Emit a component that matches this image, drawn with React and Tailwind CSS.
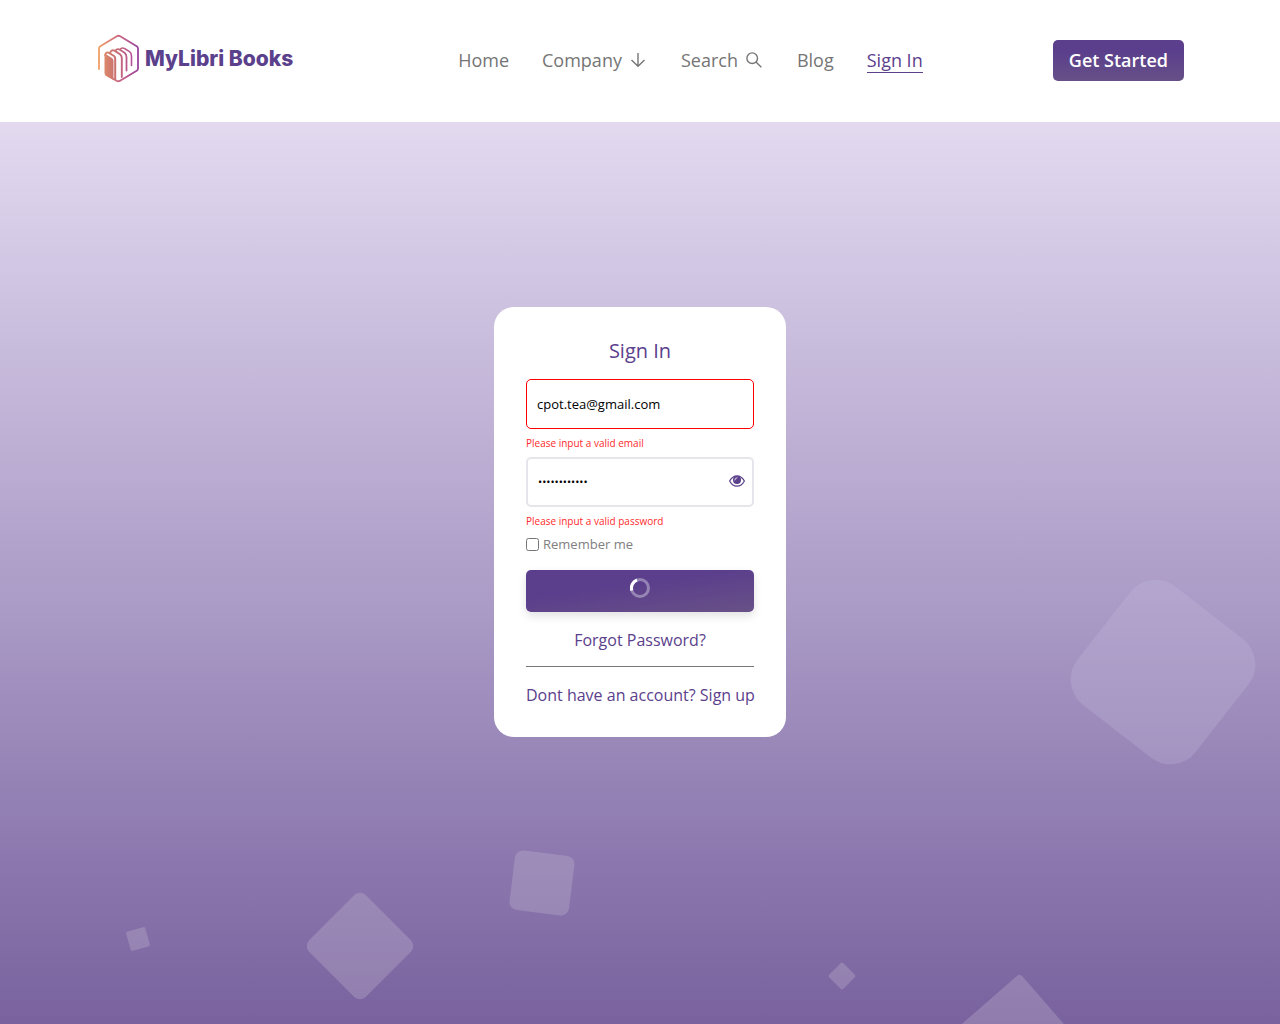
import React, { useState } from "react";

const navLink = "flex items-center text-lg leading-6 text-[#757575]";

function Logo() {
  return (
    <a href="#home" className="flex h-[50px] w-[200px] items-center text-[#5b408c]">
      <svg width="45" height="50" viewBox="0 0 45 50" fill="none" aria-hidden="true" className="shrink-0">
        <defs>
          <linearGradient id="hex" x1="2" y1="0" x2="43" y2="0" gradientUnits="userSpaceOnUse">
            <stop offset="0" stopColor="#f2a265" />
            <stop offset="0.5" stopColor="#cc6680" />
            <stop offset="1" stopColor="#98439f" />
          </linearGradient>
          <linearGradient id="book" x1="8" y1="0" x2="36" y2="0" gradientUnits="userSpaceOnUse">
            <stop offset="0" stopColor="#dd8a6b" />
            <stop offset="0.4" stopColor="#c9706f" />
            <stop offset="1" stopColor="#b5509a" />
          </linearGradient>
        </defs>
        <path d="M3 35V14.5Q3 13 4.3 12.2L20.8 2.2Q22.5 1.3 24.2 2.2L40.7 12.2Q42 13 42 14.5V34.5Q42 36 40.7 36.8L24.5 46.4Q22.5 47.8 20.5 46.8L10 41" stroke="url(#hex)" strokeWidth="1.8" strokeLinecap="round" />
        <path d="M8.500 21.500Q8.500 20 10 20.300L16 24Q17.500 25 17.500 27V46L9.800 41.200Q8.500 40.400 8.500 39Z" fill="url(#book)" />
        <path d="M9.300 22V20.500Q10 17.500 13 18.800L18 22Q19.200 23 19.200 25V46" stroke="url(#book)" strokeWidth="2" />
        <path d="M14 19Q15 15.300 18.500 16.700L24 20.300Q25.800 21.600 25.800 24V43" stroke="url(#book)" strokeWidth="1.900" strokeLinecap="round" />
        <path d="M19.500 16.500Q21 14.300 24 15.800L28.500 18.800Q30.500 20.200 30.500 23V36.500" stroke="url(#book)" strokeWidth="1.800" strokeLinecap="round" />
        <path d="M24 15.500Q25.500 13.200 28.500 14.500L33.500 17.600Q35.500 19 35.500 22V31.500" stroke="url(#book)" strokeWidth="1.600" strokeLinecap="round" />
      </svg>
      <span className="ml-1 whitespace-nowrap font-['Inter',sans-serif] text-[21px] font-extrabold leading-7">MyLibri Books</span>
    </a>
  );
}

function ArrowDown() {
  return (
    <svg width="16" height="16" viewBox="0 0 16 16" fill="none" stroke="currentColor" strokeWidth="1.4" aria-hidden="true" className="ml-2 mr-0.5">
      <path d="M8 1v13M1.5 8 8 14.3 14.5 8" />
    </svg>
  );
}

function SearchIcon() {
  return (
    <svg width="16" height="16" viewBox="0 0 16 16" fill="none" stroke="currentColor" strokeWidth="1.4" aria-hidden="true" className="ml-2 mr-0.5">
      <circle cx="6.2" cy="6.2" r="5.3" />
      <path d="m10 10 5.3 5.3" />
    </svg>
  );
}

function Header() {
  return (
    <header className="flex h-[122px] items-start justify-between bg-white px-24">
      <div className="mt-[34px]"><Logo /></div>
      <nav className="mt-12 flex items-start gap-[33px] pl-8">
        <a href="#home" className={navLink}>Home</a>
        <a href="#company" className={navLink}>Company<ArrowDown /></a>
        <a href="#search" className={navLink}>Search<SearchIcon /></a>
        <a href="#blog" className={navLink}>Blog</a>
        <a href="#signin" className="border-b border-[#5b408c] text-lg leading-6 font-medium text-[#5b408c]">Sign In</a>
      </nav>
      <button type="button" className="mt-10 h-[41px] whitespace-nowrap rounded-[5px] bg-linear-to-b from-[#5b3f8c] from-30% to-[#675087] px-4 pb-0.5 text-lg font-semibold text-white">
        Get Started
      </button>
    </header>
  );
}

function EyeIcon() {
  return (
    <svg width="16" height="12" viewBox="0 0 16 12" fill="none" aria-hidden="true">
      <path d="M.6 6Q3.500.8 8 .8T15.400 6Q12.500 11.200 8 11.200T.6 6Z" stroke="#5b408c" strokeWidth="1.200" />
      <circle cx="8" cy="5" r="4" fill="#5b408c" />
      <path d="M5.800 5Q5.800 2.800 8 2.800" stroke="#fff" strokeWidth=".8" strokeLinecap="round" />
    </svg>
  );
}

function SignInCard() {
  const [email, setEmail] = useState("cpot.tea@gmail.com");
  const [password, setPassword] = useState("passwordpass");
  const [visible, setVisible] = useState(false);
  return (
    <form onSubmit={(e) => e.preventDefault()} className="relative w-[292px] rounded-[20px] bg-white px-8 pb-[30px] pt-8">
      <h1 className="mb-4 text-center text-xl font-medium leading-6 text-[#5b408c]">Sign In</h1>
      <input
        type="email"
        aria-label="Email"
        value={email}
        onChange={(e) => setEmail(e.target.value)}
        className="block h-[50px] w-full rounded-[5px] border border-[#f00] px-2.5 text-[13px] text-black outline-none"
      />
      <p className="h-7 text-[10px] leading-7 text-[#ff2a2a]">Please input a valid email</p>
      <div className="flex h-[50px] items-center rounded-[5px] border-2 border-[#e5e5eb] pb-0.5 pl-2.5 pr-[7px]">
        <input
          type={visible ? "text" : "password"}
          aria-label="Password"
          value={password}
          onChange={(e) => setPassword(e.target.value)}
          className="h-full min-w-0 flex-1 text-[11px] text-black outline-none"
        />
        <button type="button" aria-label="Show password" onClick={() => setVisible(!visible)}>
          <EyeIcon />
        </button>
      </div>
      <p className="h-7 text-[10px] leading-7 text-[#ff2a2a]">Please input a valid password</p>
      <label className="mb-4 flex h-[19px] items-center gap-1 text-[13px] text-[#808080]">
        <input type="checkbox" className="size-[13px]" />
        Remember me
      </label>
      <button type="submit" aria-label="Signing in" className="flex h-[42px] w-full justify-center rounded-[5px] bg-linear-[172deg] from-[#5b3f8c] from-40% to-[#685187] pt-2 shadow-[0_4px_10px_rgba(0,0,0,0.12)]">
        <svg width="20" height="20" viewBox="0 0 20 20" fill="none" strokeWidth="3" aria-hidden="true">
          <circle cx="10" cy="10" r="8.500" stroke="#fff" strokeOpacity=".35" />
          <path d="M1.800 12.500A8.500 8.500 0 0 1 7 2" stroke="#fff" />
        </svg>
      </button>
      <a href="#forgot" className="mt-4 block text-center text-base leading-6 font-[370] text-[#5b408c]">Forgot Password?</a>
      <hr className="mb-4 mt-3.5 border-[#777]" />
      <a href="#signup" className="block whitespace-nowrap text-center text-base leading-6 font-[370] text-[#5b408c]">Dont have an account? Sign up</a>
    </form>
  );
}

function Squares() {
  return (
    <div aria-hidden="true" className="absolute inset-0">
      <span className="absolute bottom-[277px] right-[42px] size-[150px] rotate-38 rounded-[32px] bg-[#c8bfe0]/25" />
      <span className="absolute bottom-[75px] left-32 size-5 -rotate-16 rounded-xs bg-[#c8bcd4]/30" />
      <span className="absolute bottom-[38px] left-80 size-20 rotate-45 rounded-lg bg-[#c8bcd4]/30" />
      <span className="absolute bottom-[111px] left-[512px] size-[60px] rotate-7 rounded-lg bg-[#c8bcd4]/30" />
      <span className="absolute bottom-[38px] left-[65%] size-5 rotate-45 rounded-xs bg-[#c8bcd4]/30" />
      <span className="absolute -bottom-[70px] right-[215px] size-[100px] rotate-49 rounded bg-[#c8bcd4]/30" />
    </div>
  );
}

export default function App() {
  return (
    <div className="flex min-h-screen flex-col font-['Open_Sans',sans-serif]">
      <Header />
      <main className="relative flex flex-1 items-start justify-center overflow-hidden bg-linear-to-b from-[#e3daf0] via-[#a999c5] via-55% to-[#79629e] pb-16 pt-[185px]">
        <Squares />
        <SignInCard />
      </main>
    </div>
  );
}
